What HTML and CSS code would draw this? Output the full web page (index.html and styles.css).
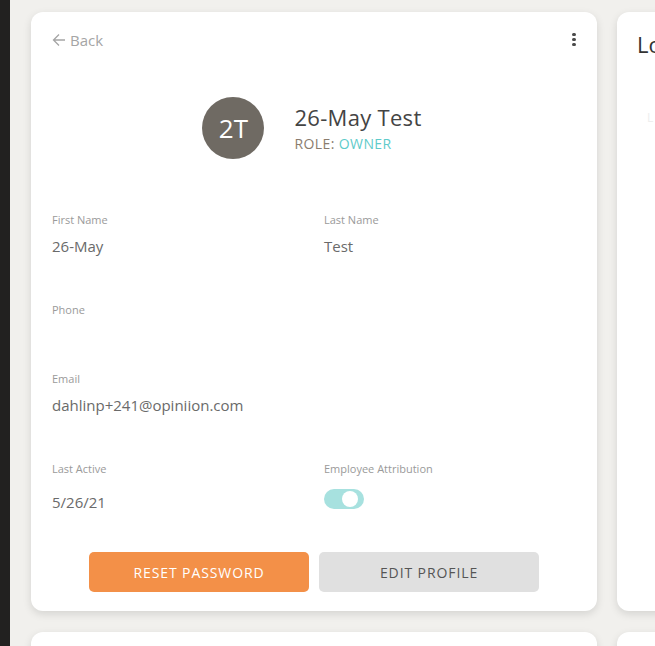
FILE: index.html
```html
<!DOCTYPE html>
<html lang="en">
<head>
  <meta charset="UTF-8">
  <title>User Profile</title>
  <link rel="stylesheet" href="styles.css">
</head>
<body>
  <div class="layout">
    <div class="sidebar"></div>
    <div class="main">
      <div class="card profile">
        <div class="topbar">
          <a class="back" href="#">
            <svg width="14" height="14" viewBox="0 0 14 14"><path d="M13 7H1.5M7 1.5L1.5 7L7 12.5" fill="none" stroke="#a5a5a5" stroke-width="1.3"/></svg>
            Back
          </a>
          <span class="kebab"><i></i><i></i><i></i></span>
        </div>

        <div class="header">
          <div class="avatar">2T</div>
          <div class="who">
            <div class="name">26-May Test</div>
            <div class="role">ROLE: <span>OWNER</span></div>
          </div>
        </div>

        <div class="fields">
          <div class="field">
            <label>First Name</label>
            <div class="value">26-May</div>
          </div>
          <div class="field">
            <label>Last Name</label>
            <div class="value">Test</div>
          </div>
          <div class="field wide phone">
            <label>Phone</label>
            <div class="value"></div>
          </div>
          <div class="field wide">
            <label>Email</label>
            <div class="value">dahlinp+241@opiniion.com</div>
          </div>
          <div class="field">
            <label>Last Active</label>
            <div class="value active">5/26/21</div>
          </div>
          <div class="field">
            <label>Employee Attribution</label>
            <div class="toggle"><span></span></div>
          </div>
        </div>

        <div class="actions">
          <button class="btn orange">RESET PASSWORD</button>
          <button class="btn grey">EDIT PROFILE</button>
        </div>
      </div>

      <div class="card side">
        <h3>Lo</h3>
        <div class="faint">L</div>
      </div>

      <div class="card"></div>
      <div class="card"></div>
    </div>
  </div>
</body>
</html>
```

FILE: styles.css
```css
body {
  margin: 0;
  font-family: "Open Sans", sans-serif;
  background-color: #f1f0ed;
  color: #666;
  overflow: hidden;
}
.layout {
  display: flex;
  height: 646px;
}
.sidebar {
  width: 10px;
  background-color: #222120;
  flex-shrink: 0;
}
.main {
  display: grid;
  grid-template-columns: 566px 566px;
  grid-auto-rows: 599px;
  gap: 21px 20px;
  padding: 12px 0 0 21px;
}
.card {
  background-color: #fff;
  border-radius: 12px;
  box-shadow: 0 3px 8px rgba(0, 0, 0, 0.12);
}
.profile {
  padding: 21px 21px 0 21px;
  box-sizing: border-box;
}
.topbar {
  display: flex;
  justify-content: space-between;
  align-items: center;
  height: 16px;
}
.back {
  display: flex;
  align-items: center;
  gap: 4px;
  color: #a5a5a5;
  text-decoration: none;
  font-size: 15px;
  margin-top: -2px;
}
.kebab {
  display: flex;
  flex-direction: column;
  gap: 2px;
  margin-right: 0;
  margin-top: -4px;
}
.kebab i {
  width: 4px;
  height: 3px;
  border-radius: 2px;
  background-color: #4a4a4a;
}
.header {
  display: flex;
  align-items: center;
  justify-content: center;
  gap: 30px;
  margin-top: 48px;
  margin-right: 4px;
}
.who {
  margin-top: 4px;
}
.avatar {
  width: 62px;
  height: 62px;
  border-radius: 50%;
  background-color: #6f6a63;
  color: #fff;
  font-size: 26px;
  display: flex;
  align-items: center;
  justify-content: center;
}
.name {
  font-size: 22px;
  color: #444;
  margin-top: -6px;
  letter-spacing: 0.3px;
}
.role {
  font-size: 14px;
  color: #8a7c6e;
  margin-top: 2px;
  letter-spacing: 0.4px;
}
.role span {
  color: #5ecbca;
}
.fields {
  display: grid;
  grid-template-columns: 272px 1fr;
  margin-top: 53px;
}
.field {
  height: 90px;
}
.field.wide {
  grid-column: span 2;
}
.field.phone {
  height: 69px;
}
.field label {
  display: block;
  font-size: 11px;
  color: #9a9a9a;
}
.value {
  font-size: 15px;
  color: #6a6a6a;
  margin-top: 9px;
}
.value.active {
  margin-top: 16px;
}
.toggle {
  width: 40px;
  height: 20px;
  border-radius: 10px;
  background-color: #a7e1df;
  margin-top: 13px;
  display: flex;
  justify-content: flex-end;
  align-items: center;
  padding: 0 6px 0 3px;
  box-sizing: border-box;
}
.toggle span {
  width: 16px;
  height: 16px;
  border-radius: 50%;
  background-color: #fff;
}
.actions {
  display: flex;
  justify-content: center;
  gap: 10px;
  margin-top: 1px;
}
.btn {
  width: 220px;
  height: 40px;
  border: none;
  border-radius: 5px;
  font-family: "Open Sans", sans-serif;
  font-size: 14px;
  font-weight: 500;
  letter-spacing: 0.9px;
}
.orange {
  background-color: #f39048;
  color: #fff;
}
.grey {
  background-color: #e0e0e0;
  color: #555;
}
.side {
  padding: 17px 20px;
  box-sizing: border-box;
}
.side h3 {
  margin: 0;
  font-weight: normal;
  font-size: 22px;
  color: #333;
}
.faint {
  color: #eee;
  font-size: 12px;
  margin-top: 50px;
  margin-left: 10px;
}
```
